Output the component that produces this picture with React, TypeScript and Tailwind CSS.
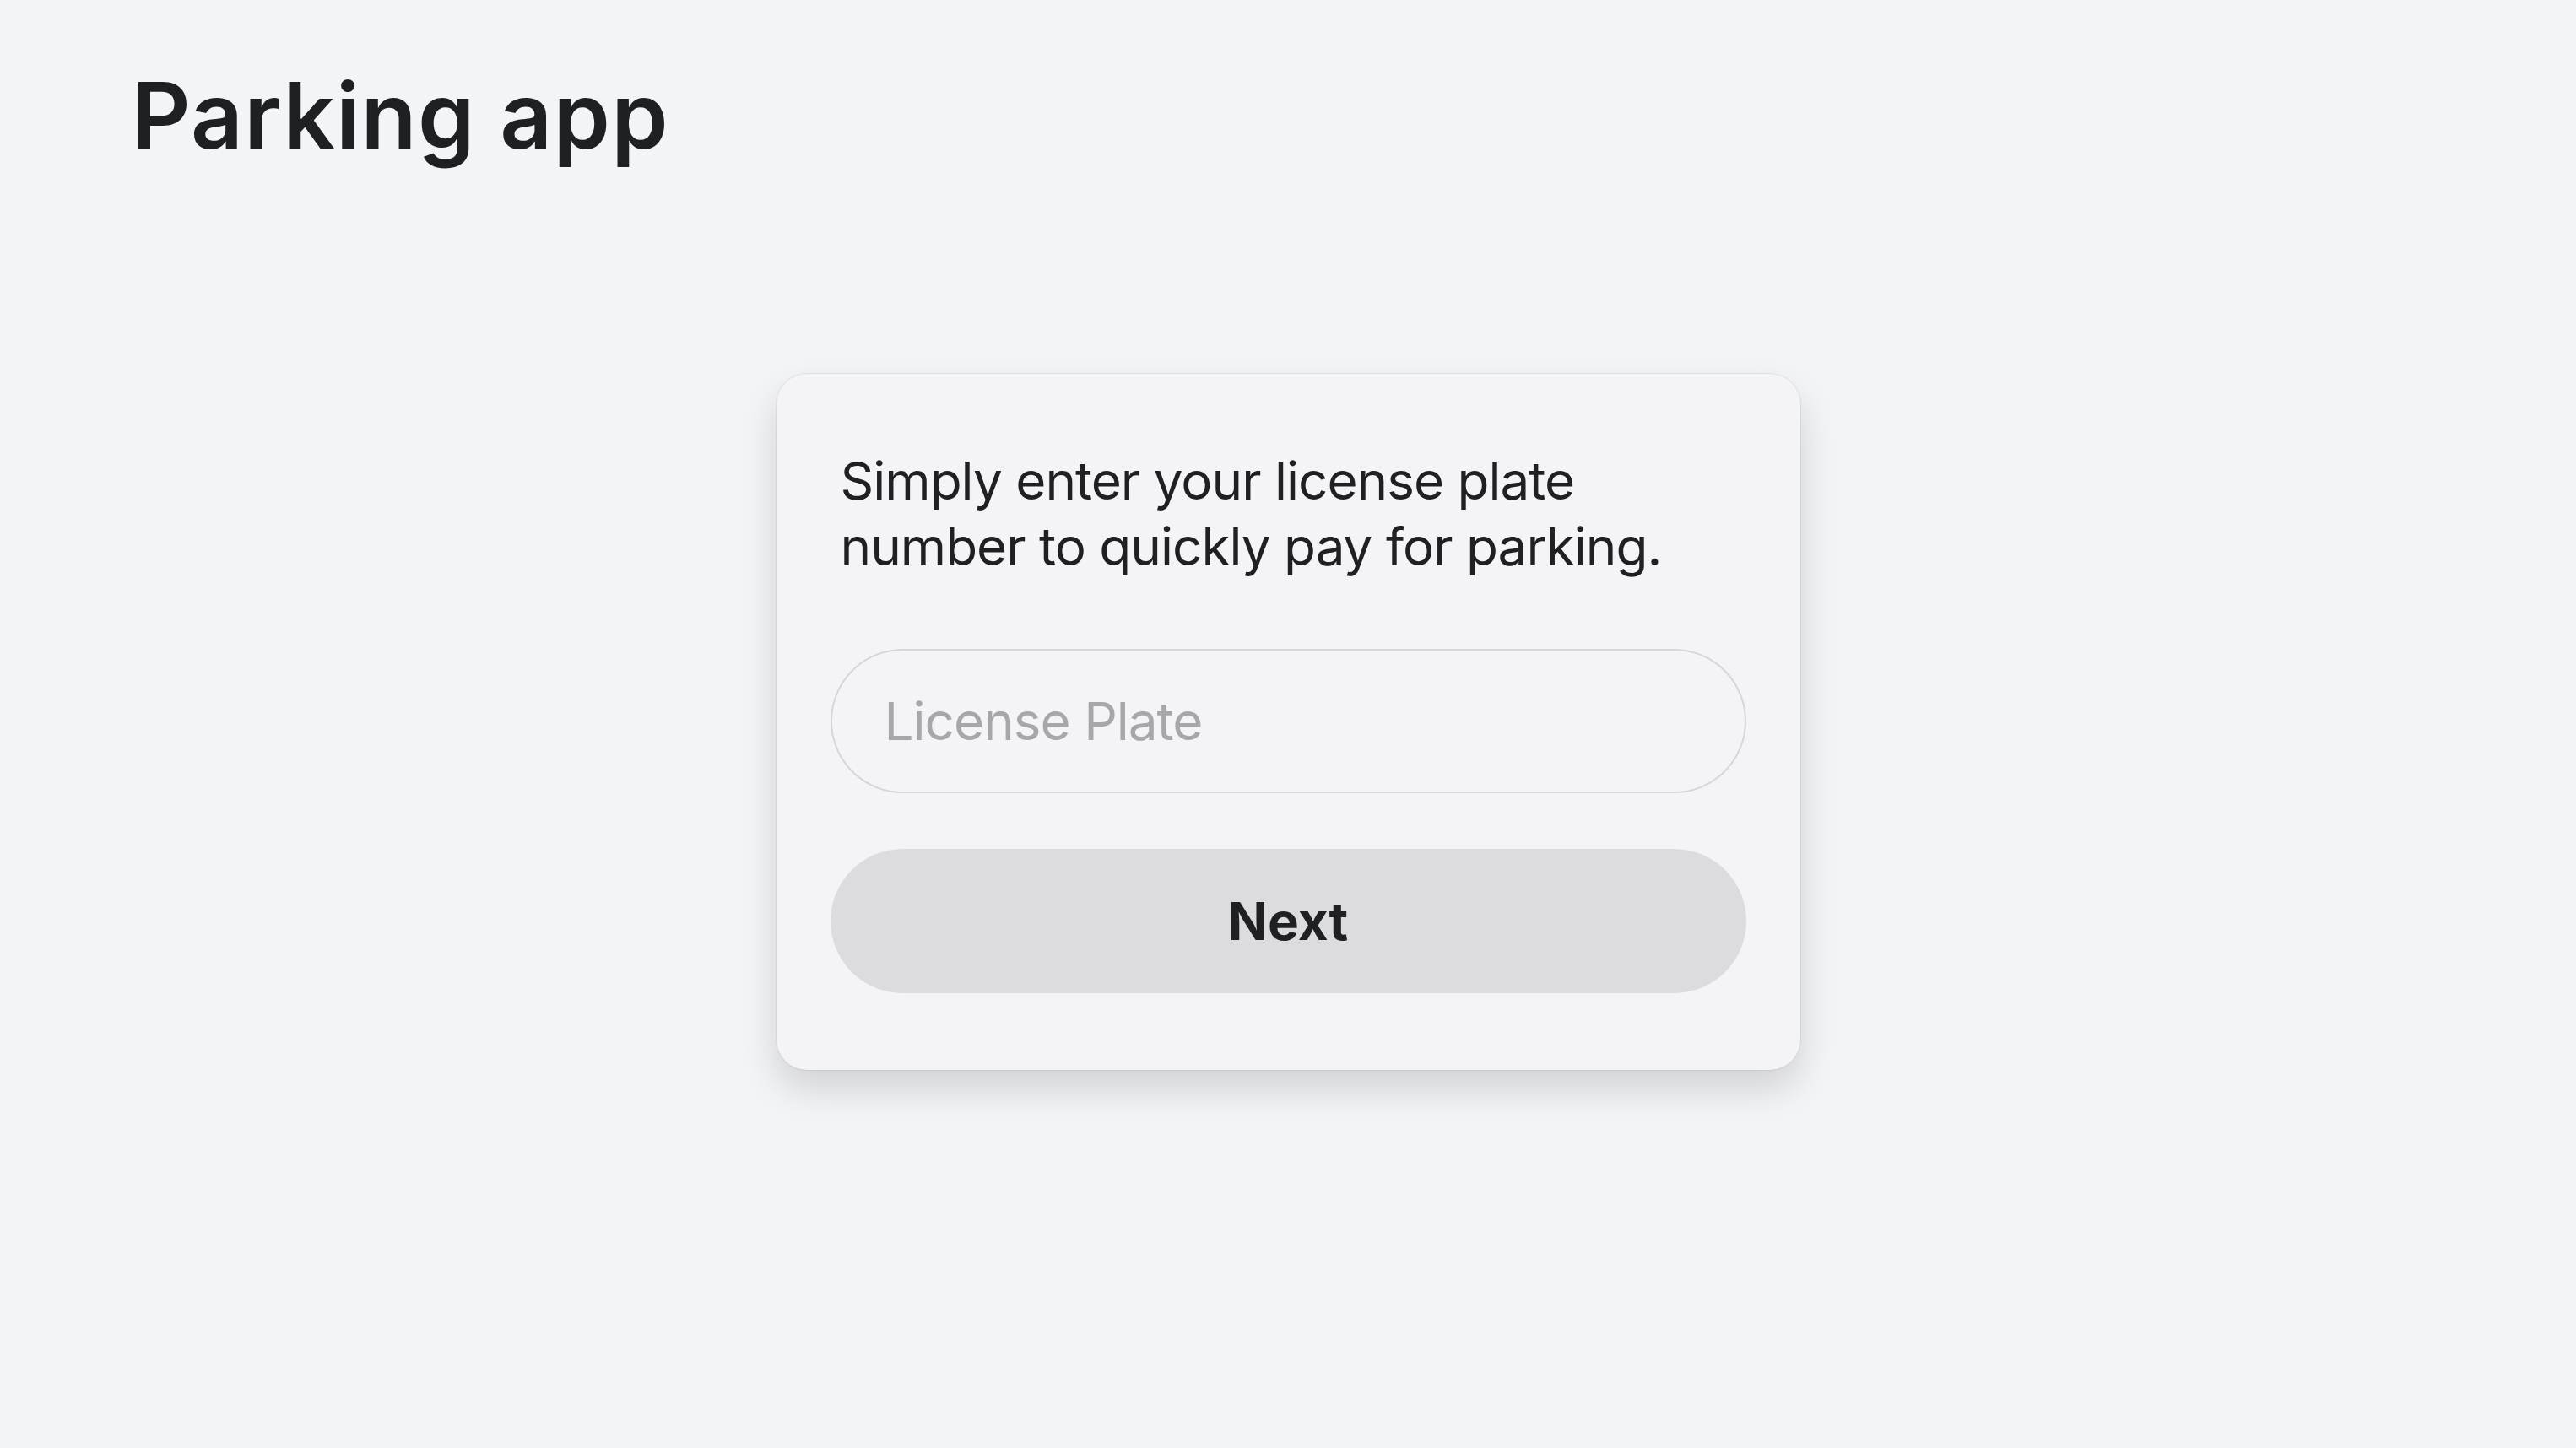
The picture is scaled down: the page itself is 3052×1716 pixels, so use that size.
export default function App() {
  return (
    <div className="min-h-screen w-full bg-[#f3f4f6] font-['Inter',sans-serif] text-[#1f2023]">
      {/* Header */}
      <header className="px-[156px] pt-[72px]">
        <h1 className="text-[108px] font-semibold leading-[1.2] tracking-[0.012em]">Parking app</h1>
      </header>

      {/* Card */}
      <main className="flex justify-center pt-[241px]">
        <div className="w-[1213px] rounded-[36px] bg-[#f4f4f6] px-[64px] pt-[88px] pb-[91px] shadow-[0_22px_44px_rgba(0,0,0,0.14),0_0_0_1px_rgba(0,0,0,0.06)]">
          <p className="px-[12px] text-[62px] leading-[78px] tracking-[-0.016em]">
            Simply enter your license plate
            <br />
            number to quickly pay for parking.
          </p>

          <input
            type="text"
            placeholder="License Plate"
            className="mt-[82px] block h-[171px] w-full rounded-full border-2 border-[#d6d6d8] bg-transparent px-[62px] text-[62px] tracking-[-0.016em] text-[#1f2023] outline-none placeholder:text-[#a7a7a9]"
          />

          <button className="mt-[66px] flex h-[171px] w-full items-center justify-center rounded-full bg-[#dcdcde] text-[62px] font-bold">
            Next
          </button>
        </div>
      </main>
    </div>
  )
}
